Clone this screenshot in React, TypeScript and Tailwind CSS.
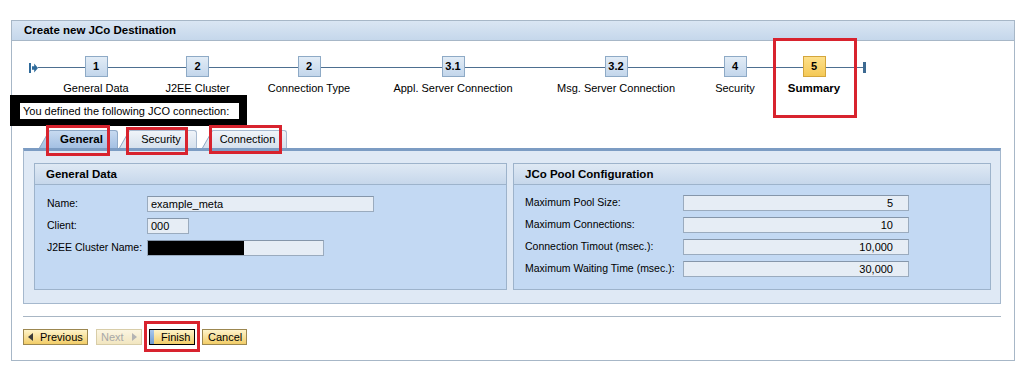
import React from "react";

const steps = [
  { n: "1", label: "General Data", w: "w-[100px]" },
  { n: "2", label: "J2EE Cluster", w: "w-[103px]" },
  { n: "2", label: "Connection Type", w: "w-[120px]" },
  { n: "3.1", label: "Appl. Server Connection", w: "w-[168px]" },
  { n: "3.2", label: "Msg. Server Connection", w: "w-[158px]" },
  { n: "4", label: "Security", w: "w-[80px]" },
  { n: "5", label: "Summary", w: "w-[78px]", current: true },
];

function Step({ n, label, w, current }: { n: string; label: string; w: string; current?: boolean }) {
  return (
    <div className={`${w} flex flex-col items-center`}>
      <div className="flex h-[21px] w-full items-center">
        <div className="mt-[2px] h-px flex-1 bg-[#4d6f90]" />
        {current ? (
          <div className="flex h-[21px] w-[23px] items-center justify-center border border-[#d4a63c] bg-linear-to-b from-[#fde08a] to-[#f5c955] font-bold">
            {n}
          </div>
        ) : (
          <div className="flex h-[21px] w-[23px] items-center justify-center border border-[#8eaac6] bg-linear-to-b from-[#e2ecf6] to-[#c3d6eb] font-bold">
            {n}
          </div>
        )}
        <div className="mt-[2px] h-px flex-1 bg-[#4d6f90]" />
      </div>
      <div className={`mt-[5px] whitespace-nowrap leading-[13px] ${current ? "text-[11.5px] font-bold" : ""}`}>
        {label}
      </div>
    </div>
  );
}

function Tab({ label, active, id, bodyW }: { label: string; active?: boolean; id: string; bodyW: string }) {
  const top = active ? "#c7daf0" : "#f0f4f9";
  const bottom = active ? "#a4c0e3" : "#d6e1ed";
  return (
    <div className="flex h-[18px] items-end">
      <svg width="11" height="18" viewBox="0 0 11 18" className="block">
        <defs>
          <linearGradient id={id} x1="0" y1="0" x2="0" y2="1">
            <stop offset="0" stopColor={top} />
            <stop offset="1" stopColor={bottom} />
          </linearGradient>
        </defs>
        <path d="M0 18 L10 0.5 L11 0.5 L11 18 Z" fill={`url(#${id})`} />
        <path d="M0.5 18 L10.3 0.8 L11 0.5" fill="none" stroke="#93abc6" strokeWidth="1" />
      </svg>
      {active ? (
        <div className={`${bodyW} flex h-[18px] items-center justify-center rounded-tr-[3px] border-t border-r border-[#8fa9c7] bg-linear-to-b from-[#c7daf0] to-[#a4c0e3] pr-[4px] text-[11.5px] font-bold`}>
          {label}
        </div>
      ) : (
        <div className={`${bodyW} flex h-[18px] items-center justify-center rounded-tr-[3px] border-t border-r border-[#a8bad0] bg-linear-to-b from-[#f0f4f9] to-[#d6e1ed] pr-[4px]`}>
          {label}
        </div>
      )}
    </div>
  );
}

function Field({ label, labelW, inputW, value, right, redacted }: {
  label: string;
  labelW: string;
  inputW: string;
  value?: string;
  right?: boolean;
  redacted?: boolean;
}) {
  return (
    <div className="flex h-[22px] items-center text-[10.5px]">
      <div className={`${labelW} whitespace-nowrap`}>{label}</div>
      <div
        className={`${inputW} flex h-[16px] items-center border border-[#9aabbe] border-t-[#8596aa] bg-[#e6edf5] text-[11px] leading-none ${
          right ? "justify-end pr-[15px]" : "pl-[3px]"
        }`}
      >
        {redacted ? <div className="-ml-[3px] h-[14px] w-[96px] bg-black" /> : value}
      </div>
    </div>
  );
}

function Button({ children, disabled, focused, className = "" }: {
  children: React.ReactNode;
  disabled?: boolean;
  focused?: boolean;
  className?: string;
}) {
  if (disabled) {
    return (
      <div className={`flex h-[16px] items-center border border-[#d8cda8] bg-linear-to-b from-[#fbf5e1] to-[#f2e6c0] text-[#a8a8a8] ${className}`}>
        {children}
      </div>
    );
  }
  return (
    <div
      className={`flex h-[16px] items-center border bg-linear-to-b from-[#fef3c9] to-[#f2cd66] ${
        focused ? "border-black" : "border-[#9c8750]"
      } ${className}`}
    >
      {children}
    </div>
  );
}

export default function App() {
  return (
    <div className="relative h-[373px] w-[1031px] bg-white pl-[11px] pt-[20px] font-['Liberation_Sans',Arial,sans-serif] text-[11px] text-black">
      <div className="flex w-[1004px] flex-col border border-[#a7b7c7]">
        {/* title */}
        <div className="h-[20px] border-b border-[#a7b7c7] bg-linear-to-b from-[#dae6f3] to-[#c5d7eb] pl-[12px] text-[11.5px] font-bold leading-[19px]">
          Create new JCo Destination
        </div>

        <div className="flex flex-col pb-[15px] pl-[11px] pr-[13px] pt-[15px]">
          {/* roadmap */}
          <div className="flex items-start">
            <div className="ml-[6px] flex h-[21px] items-center">
              <svg width="9" height="10" viewBox="0 0 9 10" className="mt-[2px] block">
                <rect x="0" y="0" width="2" height="10" fill="#2f6a9a" />
                <path d="M3 3.2H5.2V0.6L9 5L5.2 9.4V6.8H3Z" fill="#2f6a9a" />
              </svg>
            </div>
            <div className="flex h-[21px] w-[8px] items-center">
              <div className="mt-[2px] h-px w-full bg-[#4d6f90]" />
            </div>
            {steps.map((s, i) => (
              <Step key={i} {...s} />
            ))}
            <div className="flex h-[21px] items-center">
              <div className="mt-[2px] h-px w-[10px] bg-[#4d6f90]" />
              <div className="mt-[2px] h-[11px] w-[3px] bg-[#3d6a92]" />
            </div>
          </div>

          {/* black box */}
          <div className="-ml-[13px] w-[237px] border-[8px] border-l-[10px] border-b-[7px] border-black bg-white pl-[3px] leading-[16px]">
            You defined the following JCO connection:
          </div>

          {/* tabs */}
          <div className="mt-[4px] flex items-end pl-[16px]">
            <Tab id="t1" label="General" active bodyW="w-[68px]" />
            <div className="w-[1px]" />
            <Tab id="t2" label="Security" bodyW="w-[67px]" />
            <div className="w-[5px]" />
            <Tab id="t3" label="Connection" bodyW="w-[74px]" />
          </div>

          {/* tab panel */}
          <div className="border-x border-b border-t-[3px] border-x-[#a5b8cd] border-b-[#a5b8cd] border-t-[#7c9cc3] bg-[#dfe9f5] pb-[13px] pl-[10px] pr-[9px] pt-[12px]">
            <div className="flex gap-[6px]">
              <div className="h-[127px] w-[473px] border border-[#9db3cb] bg-[#c3d9f3]">
                <div className="h-[21px] border-b border-[#9db3cb] bg-linear-to-b from-[#dfe9f4] to-[#c6d7eb] pl-[11px] text-[11.5px] font-bold leading-[20px]">
                  General Data
                </div>
                <div className="pl-[12px] pt-[8px]">
                  <Field label="Name:" labelW="w-[100px]" inputW="w-[227px]" value="example_meta" />
                  <Field label="Client:" labelW="w-[100px]" inputW="w-[42px]" value="000" />
                  <Field label="J2EE Cluster Name:" labelW="w-[100px]" inputW="w-[177px]" redacted />
                </div>
              </div>
              <div className="h-[127px] flex-1 border border-[#9db3cb] bg-[#c3d9f3]">
                <div className="h-[21px] border-b border-[#9db3cb] bg-linear-to-b from-[#dfe9f4] to-[#c6d7eb] pl-[11px] text-[11.5px] font-bold leading-[20px]">
                  JCo Pool Configuration
                </div>
                <div className="pl-[11px] pt-[7px]">
                  <Field label="Maximum Pool Size:" labelW="w-[158px]" inputW="w-[226px]" value="5" right />
                  <Field label="Maximum Connections:" labelW="w-[158px]" inputW="w-[226px]" value="10" right />
                  <Field label="Connection Timout (msec.):" labelW="w-[158px]" inputW="w-[226px]" value="10,000" right />
                  <Field label="Maximum Waiting Time (msec.):" labelW="w-[158px]" inputW="w-[226px]" value="30,000" right />
                </div>
              </div>
            </div>
          </div>

          {/* separator */}
          <div className="mt-[12px] h-px bg-[#a8b6c4]" />

          {/* buttons */}
          <div className="mt-[12px] flex">
            <Button className="w-[65px] pl-[4px]">
              <svg width="5" height="8" viewBox="0 0 5 8" className="block">
                <path d="M5 0V8L0 4Z" fill="#3a3a3a" />
              </svg>
              <span className="ml-[7px]">Previous</span>
            </Button>
            <Button disabled className="ml-[8px] w-[46px] pl-[4px]">
              <span>Next</span>
              <svg width="5" height="8" viewBox="0 0 5 8" className="ml-[8px] block">
                <path d="M0 0V8L5 4Z" fill="#b4b4b4" />
              </svg>
            </Button>
            <Button focused className="ml-[7px] w-[46px]">
              <div className="h-[14px] w-[4px] bg-linear-to-b from-[#a9c8ec] to-[#6f9bd3]" />
              <span className="ml-[7px]">Finish</span>
            </Button>
            <Button className="ml-[7px] w-[45px] pl-[5px]">
              <span>Cancel</span>
            </Button>
          </div>
        </div>
      </div>

      {/* annotation boxes */}
      <div className="absolute left-[773px] top-[38px] h-[80px] w-[84px] border-[3px] border-[#d8232e]" />
      <div className="absolute left-[46px] top-[125px] h-[31px] w-[64px] border-[3px] border-[#d8232e]" />
      <div className="absolute left-[126px] top-[127px] h-[28px] w-[62px] border-[3px] border-[#d8232e]" />
      <div className="absolute left-[209px] top-[125px] h-[29px] w-[73px] border-[3px] border-[#d8232e]" />
      <div className="absolute left-[144px] top-[321px] h-[31px] w-[56px] border-[3px] border-[#d8232e]" />
    </div>
  );
}
